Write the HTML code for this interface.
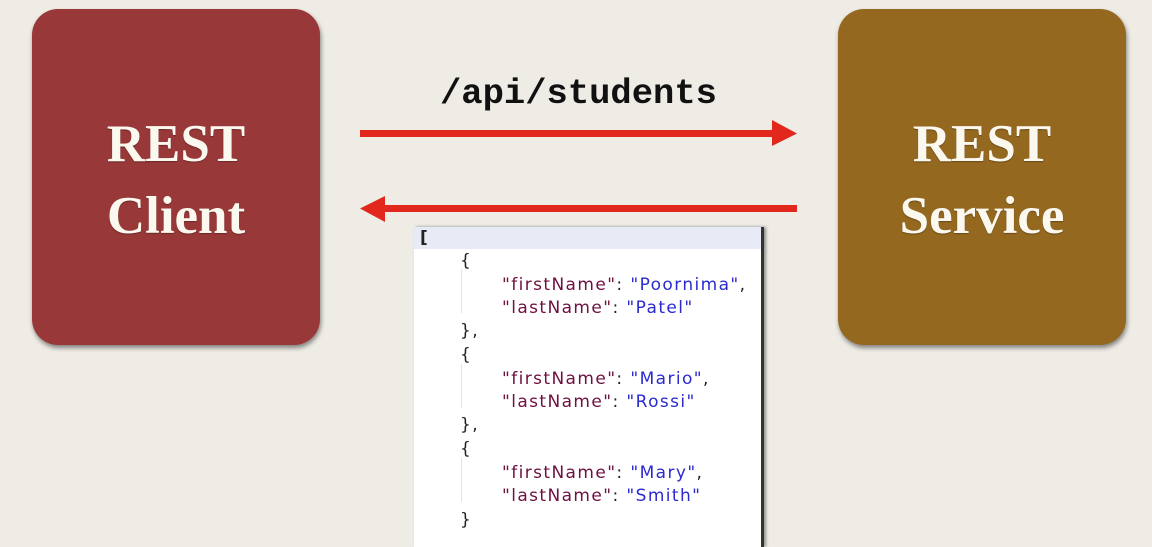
<!DOCTYPE html>
<html><head><meta charset="utf-8"><style>
body{margin:0;width:1152px;height:536px;overflow:hidden;background:#efece6;position:relative;font-family:"Liberation Sans",sans-serif}
.box{position:absolute;top:9px;width:288px;height:336px;border-radius:26px;box-shadow:1px 3px 5px rgba(0,0,0,.45);color:#fbf8f0;font-family:"Liberation Serif",serif;font-weight:bold;font-size:53px;text-align:center;line-height:72px;box-sizing:border-box;padding-top:99px;text-shadow:0 1px 1px rgba(0,0,0,.3)}
.api{position:absolute;left:440px;top:72px;font-family:"Liberation Mono",monospace;font-weight:bold;font-size:35.5px;line-height:44px;color:#111}
.json{position:absolute;left:414px;top:227px;width:347px;height:320px;background:#fff;border-right:3px solid #333;box-shadow:2px 0 3px rgba(0,0,0,.4)}
.hl{position:absolute;left:0;top:0;width:347px;height:22px;background:#e6ebf6}
.ln{position:absolute;font-family:"DejaVu Sans",sans-serif;font-size:17px;letter-spacing:1.4px;white-space:pre;color:#222;line-height:20px}
.k{color:#6e1040}.v{color:#2a2ad0}
.g{position:absolute;left:47px;width:1px;background:#e4e4e4}
</style></head><body>
<div class="box" style="left:32px;background:#993838">REST<br>Client</div>
<div class="box" style="left:838px;background:#94681f">REST<br>Service</div>
<div class="api">/api/students</div>
<svg width="1152" height="536" style="position:absolute;left:0;top:0">
<rect x="360" y="130" width="414" height="7" fill="#e2281c"/>
<polygon points="772,120 797,133.5 772,146" fill="#e2281c"/>
<rect x="383" y="205" width="414" height="7" fill="#e2281c"/>
<polygon points="385,196 360,208.5 385,222" fill="#e2281c"/>
</svg>
<div class="json">
<div class="hl"></div>
<div class="g" style="top:42px;height:44px"></div>
<div class="g" style="top:137px;height:44px"></div>
<div class="g" style="top:231px;height:44px"></div>
<div class="ln" style="left:6px;top:1px;font-weight:bold">[</div>
<div class="ln" style="left:46px;top:24px">{</div>
<div class="ln" style="left:88px;top:48px"><span class="k">"firstName"</span>: <span class="v">"Poornima"</span>,</div>
<div class="ln" style="left:88px;top:71px"><span class="k">"lastName"</span>: <span class="v">"Patel"</span></div>
<div class="ln" style="left:46px;top:94px">},</div>
<div class="ln" style="left:46px;top:118px">{</div>
<div class="ln" style="left:88px;top:142px"><span class="k">"firstName"</span>: <span class="v">"Mario"</span>,</div>
<div class="ln" style="left:88px;top:165px"><span class="k">"lastName"</span>: <span class="v">"Rossi"</span></div>
<div class="ln" style="left:46px;top:188px">},</div>
<div class="ln" style="left:46px;top:212px">{</div>
<div class="ln" style="left:88px;top:236px"><span class="k">"firstName"</span>: <span class="v">"Mary"</span>,</div>
<div class="ln" style="left:88px;top:259px"><span class="k">"lastName"</span>: <span class="v">"Smith"</span></div>
<div class="ln" style="left:46px;top:283px">}</div>
</div>
</body></html>
